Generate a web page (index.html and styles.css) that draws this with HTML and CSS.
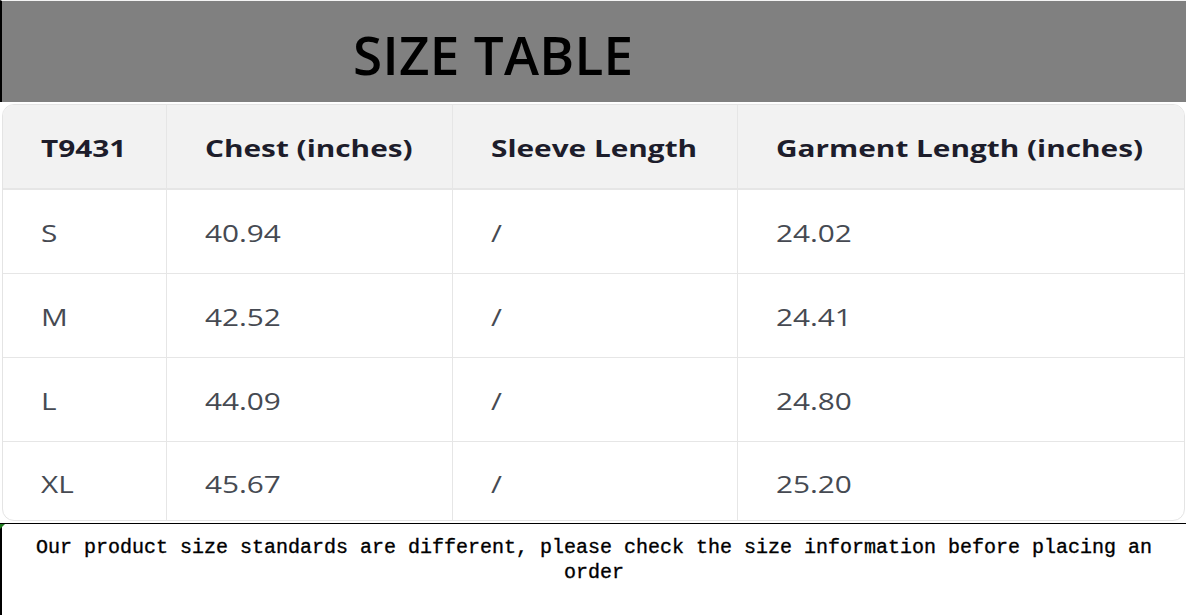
FILE: index.html
```html
<!DOCTYPE html>
<html lang="en">
<head>
<meta charset="utf-8">
<title>Size Table</title>
<link rel="stylesheet" href="styles.css">
</head>
<body>
<header class="banner">
  <h1 class="banner-title">SIZE TABLE</h1>
</header>
<div class="size-table">
  <div class="cell head"><span class="txt">T9431</span></div>
  <div class="cell head"><span class="txt">Chest (inches)</span></div>
  <div class="cell head"><span class="txt">Sleeve Length</span></div>
  <div class="cell head last"><span class="txt">Garment Length (inches)</span></div>

  <div class="cell"><span class="txt">S</span></div>
  <div class="cell"><span class="txt">40.94</span></div>
  <div class="cell"><span class="txt">/</span></div>
  <div class="cell last"><span class="txt">24.02</span></div>

  <div class="cell"><span class="txt">M</span></div>
  <div class="cell"><span class="txt">42.52</span></div>
  <div class="cell"><span class="txt">/</span></div>
  <div class="cell last"><span class="txt">24.41</span></div>

  <div class="cell"><span class="txt">L</span></div>
  <div class="cell"><span class="txt">44.09</span></div>
  <div class="cell"><span class="txt">/</span></div>
  <div class="cell last"><span class="txt">24.80</span></div>

  <div class="cell final"><span class="txt">XL</span></div>
  <div class="cell final"><span class="txt">45.67</span></div>
  <div class="cell final"><span class="txt">/</span></div>
  <div class="cell final last"><span class="txt">25.20</span></div>
</div>
<footer class="note">
  <p class="note-text">Our product size standards are different, please check the size information before placing an order</p>
</footer>
</body>
</html>
```
FILE: styles.css
```css
html, body {
  margin: 0;
  padding: 0;
  background: #ffffff;
}

body {
  width: 1186px;
  height: 615px;
  overflow: hidden;
}

.banner {
  box-sizing: border-box;
  height: 102px;
  background: #808080;
  border-top: 1px solid #f4f4f4;
  border-left: 2px solid #000000;
  display: flex;
  align-items: center;
  padding-left: 351px;
}

.banner-title {
  margin: 0;
  font-family: "Open Sans", "Liberation Sans", sans-serif;
  font-weight: 600;
  font-size: 53px;
  line-height: 1;
  color: #000000;
  letter-spacing: 0.3px;
  padding-top: 5px;
}

.size-table {
  box-sizing: border-box;
  margin: 2px 1px 0 2px;
  height: 417px;
  display: grid;
  grid-template-columns: 164px 286px 285px 1fr;
  grid-template-rows: 85px 84px 84px 84px 80px;
  border: 1px solid #e4e4e4;
  border-radius: 12px;
  overflow: hidden;
  font-family: "Open Sans", "Liberation Sans", sans-serif;
}

.cell {
  display: flex;
  align-items: center;
  padding-left: 38px;
  padding-top: 2px;
  font-size: 24px;
  color: #464a52;
  border-right: 1px solid #e6e6e6;
  border-bottom: 1px solid #e6e6e6;
  white-space: nowrap;
}

.txt {
  display: inline-block;
  transform: scaleX(1.24);
  transform-origin: left center;
}

.cell.head {
  background: #f2f2f2;
  color: #1d1d2b;
  font-weight: 700;
  font-size: 24px;
  border-bottom-width: 2px;
}

.cell.last {
  border-right: none;
}

.cell.final {
  border-bottom: none;
}

.note {
  box-sizing: border-box;
  position: relative;
  margin-top: 2px;
  height: 92px;
  border-top: 1px solid #000000;
  border-left: 2px solid #000000;
  padding-top: 11px;
}

.note::before {
  content: "";
  position: absolute;
  left: -2px;
  top: 0;
  width: 0;
  height: 0;
  border-top: 5px solid #1e7a1e;
  border-right: 5px solid transparent;
}

.note-text {
  margin: 0;
  font-family: "Liberation Mono", "DejaVu Sans Mono", monospace;
  font-size: 20px;
  line-height: 25px;
  color: #000000;
  text-align: center;
  -webkit-text-stroke: 0.35px #000000;
}
```
